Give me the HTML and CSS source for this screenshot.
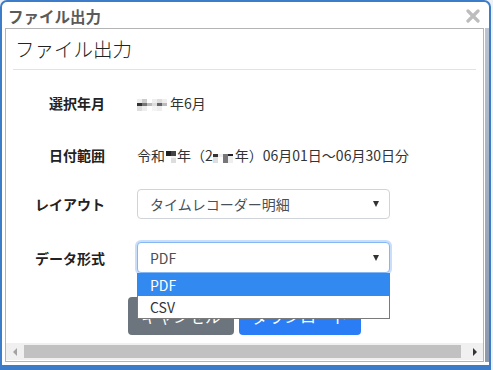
FILE: index.html
```html
<!DOCTYPE html>
<html lang="ja">
<head>
<meta charset="utf-8">
<title>ファイル出力</title>
<link rel="stylesheet" href="styles.css">
</head>
<body>
<div class="window">
  <div class="titlebar">
    <span class="title">ファイル出力</span>
    <svg class="close" width="14" height="14" viewBox="0 0 14 14"><path d="M2 2L12 12M12 2L2 12" stroke="#bdbdbd" stroke-width="3.2" stroke-linecap="round"/></svg>
  </div>
  <div class="frame">
    <div class="inner">
      <div class="content">
        <h1 class="heading">ファイル出力</h1>
        <div class="rule"></div>
        <div class="form">
          <div class="row row-1">
            <div class="label">選択年月</div>
            <div class="value"><span class="mosaic"><i class="m1"></i><i class="m2"></i><i class="m3"></i><i class="m4"></i><i class="m5"></i><i class="m6"></i></span>年6月</div>
          </div>
          <div class="row row-2">
            <div class="label">日付範囲</div>
            <div class="value">令和<span class="mosaic mosaic-sm"><i class="b1"></i><i class="b2"></i></span>年（2<span class="mosaic mosaic-md"><i class="c1"></i><i class="c2"></i><i class="c3"></i><i class="c4"></i></span>年）06月01日～06月30日分</div>
          </div>
          <div class="row row-3">
            <div class="label">レイアウト</div>
            <div class="value"><div class="select"><span>タイムレコーダー明細</span><span class="arrow"></span></div></div>
          </div>
          <div class="row row-4">
            <div class="label">データ形式</div>
            <div class="value dd-anchor">
              <div class="select focus"><span>PDF</span><span class="arrow"></span></div>
              <ul class="dropdown">
                <li class="opt active">PDF</li>
                <li class="opt">CSV</li>
              </ul>
            </div>
          </div>
        </div>
        <div class="buttons">
          <button class="btn btn-gray">キャンセル</button>
          <button class="btn btn-blue">ダウンロード</button>
        </div>
      </div>
      <div class="hscroll">
        <span class="sarrow left"></span>
        <span class="thumb"></span>
        <span class="sarrow right"></span>
      </div>
    </div>
    <div class="vstrip"></div>
  </div>
</div>
</body>
</html>
```

FILE: styles.css
```css
* { box-sizing: border-box; }
html, body { margin: 0; padding: 0; }
body {
  width: 493px;
  height: 370px;
  background: #eef1f5;
  font-family: "Noto Sans CJK JP", "Noto Sans", sans-serif;
  overflow: hidden;
}
.window {
  width: 491px;
  height: 370px;
  border: 2px solid #3d7cc9;
  border-bottom-width: 5px;
  border-radius: 7px 7px 0 0;
  background: #fff;
  display: flex;
  flex-direction: column;
}
.titlebar {
  height: 26px;
  padding: 1px 0 0 6px;
  display: flex;
  align-items: center;
  justify-content: space-between;
}
.title {
  font-size: 15.5px;
  font-weight: bold;
  color: #5a5a5a;
  line-height: 24px;
}
.close { margin-right: 9px; margin-top: 1px; }
.frame {
  display: flex;
  height: 334px;
  padding-left: 3px;
}
.inner {
  width: 480px;
  height: 334px;
  border: 1px solid #b4b4b4;
  display: flex;
  flex-direction: column;
}
.vstrip {
  width: 4px;
  margin-left: 1px;
  background: linear-gradient(#b9c3d1, #8c99ad);
}
.content {
  flex: 1;
  padding: 6px 7px 0 7px;
  overflow: hidden;
}
.heading {
  margin: 0;
  padding-left: 2px;
  font-size: 19.5px;
  font-weight: 300;
  line-height: 28px;
  color: #222;
}
.rule {
  margin-top: 6px;
  height: 1px;
  background: #e2e2e2;
}
.form { margin-top: 18px; }
.row {
  display: grid;
  grid-template-columns: 92px 253px;
  column-gap: 32px;
  align-items: center;
  height: 30px;
}
.row-2 { margin-top: 22px; }
.row-3 { margin-top: 19px; }
.row-4 { margin-top: 23px; height: 31px; }
.label {
  text-align: right;
  font-size: 14px;
  font-weight: bold;
  color: #222;
}
.value {
  font-size: 14px;
  color: #333;
  white-space: nowrap;
}
.mosaic {
  display: inline-flex;
  vertical-align: middle;
  margin-right: 3px;
}
.mosaic i { display: block; width: 5px; height: 12px; }
.m1 { background: linear-gradient(#eee 0 30%, #333 30% 60%, #ddd 60%); }
.m2 { background: linear-gradient(#ccc 0 30%, #777 30% 60%, #eee 60%); }
.m3 { background: linear-gradient(#fff 0 30%, #bbb 30% 60%, #fff 60%); }
.m4 { background: linear-gradient(#eee 0 30%, #ddd 30% 60%, #f4f4f4 60%); }
.m5 { background: linear-gradient(#ddd 0 30%, #666 30% 60%, #eee 60%); }
.m6 { background: linear-gradient(#eee 0 30%, #bbb 30% 60%, #fff 60%); }
.mosaic-sm { margin: 0 1px; }
.mosaic-sm i { width: 5px; }
.b1 { background: linear-gradient(#222 0 40%, #fff 40%); }
.b2 { background: linear-gradient(#444 0 40%, #f4f4f4 40% 60%, #ddd 60%); }
.mosaic-md { margin: 0 2px 0 0; }
.c1 { background: linear-gradient(#fff 0 25%, #333 25% 50%, #ddd 50%); }
.c2 { background: linear-gradient(#fff 0 25%, #eee 25% 50%, #fff 50%); }
.c3 { background: linear-gradient(#fff 0 25%, #777 25%); }
.c4 { background: linear-gradient(#fff 0 25%, #222 25% 45%, #eee 45%); }
.select {
  height: 30px;
  border: 1px solid #ced4da;
  border-radius: 4px;
  padding: 0 10px 0 12px;
  display: flex;
  align-items: center;
  justify-content: space-between;
  font-size: 14px;
  color: #495057;
  background: #fff;
}
.select.focus {
  height: 31px;
  border-color: #86b7f5;
  box-shadow: 0 0 0 2px rgba(100, 160, 240, 0.35);
}
.arrow {
  width: 0;
  height: 0;
  border-left: 3px solid transparent;
  border-right: 3px solid transparent;
  border-top: 6px solid #333;
}
.dd-anchor { position: relative; }
.dropdown {
  position: absolute;
  left: 0;
  top: 31px;
  width: 253px;
  margin: 0;
  padding: 0;
  list-style: none;
  border: 1px solid #7a7a7a;
  background: #fff;
  z-index: 5;
}
.opt {
  height: 22px;
  line-height: 22px;
  padding-left: 12px;
  font-size: 14px;
  color: #333;
}
.opt.active {
  background: #3289f0;
  color: #fff;
}
.buttons {
  margin-top: 24px;
  display: flex;
  justify-content: center;
  gap: 5px;
}
.btn {
  height: 38px;
  border: 0;
  border-radius: 4px;
  font-family: inherit;
  font-size: 16px;
  color: #fff;
}
.btn-gray { width: 106px; background: #6c757d; }
.btn-blue { width: 122px; background: #2b7df6; }
.hscroll {
  height: 17px;
  background: #f0f0f0;
  display: flex;
  align-items: center;
  margin-bottom: 1px;
}
.sarrow {
  width: 17px;
  display: flex;
  justify-content: center;
}
.sarrow.left::before {
  content: "";
  border-top: 4px solid transparent;
  border-bottom: 4px solid transparent;
  border-right: 4px solid #a3a3a3;
}
.sarrow.right::before {
  content: "";
  border-top: 4px solid transparent;
  border-bottom: 4px solid transparent;
  border-left: 4px solid #333;
}
.thumb {
  flex: 1;
  height: 13px;
  background: #c1c1c1;
  margin: 0 5px 0 1px;
}
```
